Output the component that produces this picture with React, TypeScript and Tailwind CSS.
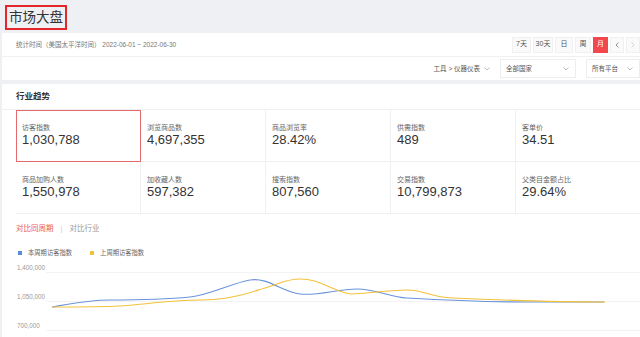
import React from "react";

const stats = [
  { label: "访客指数", value: "1,030,788", active: true },
  { label: "浏览商品数", value: "4,697,355" },
  { label: "商品浏览率", value: "28.42%" },
  { label: "供需指数", value: "489" },
  { label: "客单价", value: "34.51" },
  { label: "商品加购人数", value: "1,550,978" },
  { label: "加收藏人数", value: "597,382" },
  { label: "搜索指数", value: "807,560" },
  { label: "交易指数", value: "10,799,873" },
  { label: "父类目金额占比", value: "29.64%" },
];

function Chevron({ className = "" }: { className?: string }) {
  return (
    <svg width="6" height="4" viewBox="0 0 6 4" className={className}>
      <path d="M0.5 0.5 L3 3 L5.5 0.5" fill="none" stroke="#aaa" strokeWidth="0.8" />
    </svg>
  );
}

export default function App() {
  return (
    <div className="w-[640px] h-[337px] overflow-hidden bg-[#eef0f3] font-['Liberation_Sans','Noto_Sans_CJK_SC',sans-serif] text-[#333]">
      {/* header */}
      <div className="h-[33px] pl-[5px] pt-[5px]">
        <div className="inline-flex h-[25px] w-[62px] items-center justify-center border-2 border-[#e3262c] text-[13.5px] leading-none text-[#333]">
          市场大盘
        </div>
      </div>

      {/* filter panel */}
      <div className="ml-[2px] bg-white">
        <div className="flex h-[24px] items-center justify-between border-b border-[#f0f0f0] pl-[14px]">
          <div className="text-[6.5px] text-[#777]">统计时间（美国太平洋时间） 2022-06-01 ~ 2022-06-30</div>
          <div className="flex h-[16px] items-stretch gap-[2px] text-[7px] text-[#555]">
            <div className="flex w-[19px] items-center justify-center border border-[#f0f0f0] bg-[#fafafa]">7天</div>
            <div className="flex w-[20px] items-center justify-center border border-[#f0f0f0] bg-[#fafafa]">30天</div>
            <div className="flex w-[18px] items-center justify-center border border-[#f0f0f0] bg-[#fafafa]">日</div>
            <div className="flex w-[16px] items-center justify-center border border-[#f0f0f0] bg-[#fafafa]">周</div>
            <div className="flex w-[15px] items-center justify-center bg-[#f2474d] text-white">月</div>
            <div className="flex w-[14px] items-center justify-center border border-[#f0f0f0] bg-[#fafafa] text-[#777]">
              <svg width="4" height="6" viewBox="0 0 4 6"><path d="M3.5 0.5 L1 3 L3.5 5.5" fill="none" stroke="#777" strokeWidth="0.8" /></svg>
            </div>
            <div className="flex w-[14px] items-center justify-center border border-[#f0f0f0] bg-[#fafafa]">
              <svg width="4" height="6" viewBox="0 0 4 6"><path d="M0.5 0.5 L3 3 L0.5 5.5" fill="none" stroke="#ccc" strokeWidth="0.8" /></svg>
            </div>
          </div>
        </div>
        <div className="flex h-[23px] items-center justify-end gap-[8px] text-[6.5px] text-[#555]">
          <div className="flex items-center gap-[4px] pr-[2px]">
            <span>工具 &gt; 仪器仪表</span>
            <Chevron />
          </div>
          <div className="flex h-[19px] w-[76px] items-center justify-between border border-[#eee] pl-[5px] pr-[6px]">
            <span>全部国家</span>
            <Chevron />
          </div>
          <div className="ml-[2px] flex h-[19px] w-[54px] items-center justify-between border border-[#eee] pl-[5px] pr-[6px]">
            <span>所有平台</span>
            <Chevron />
          </div>
        </div>
      </div>

      {/* main panel */}
      <div className="ml-[2px] mt-[4px] h-[253px] bg-white">
        <div className="flex h-[26px] items-center border-b border-[#f0f0f0] pl-[14px] text-[8.5px] font-bold text-[#333]">
          行业趋势
        </div>
        <div className="ml-[14px] grid grid-cols-[125px_125px_125px_125px_125px]">
          {stats.map((s, i) => (
            <div
              key={i}
              className={
                s.active
                  ? "h-[52px] border border-[#e46a6c] pl-[5px] pt-[12px]"
                  : "h-[52px] border-b border-r border-[#f0f0f0] pl-[6px] pt-[13px]"
              }
            >
              <div className="text-[7px] leading-[10px] text-[#666]">{s.label}</div>
              <div className="text-[13px] leading-[14px] text-[#333]">{s.value}</div>
            </div>
          ))}
        </div>

        <div className="flex h-[30px] items-center pl-[14px] text-[7.5px]">
          <span className="text-[#ea5a55]">对比同周期</span>
          <span className="mx-[7px] text-[#ccc]">|</span>
          <span className="text-[#999]">对比行业</span>
        </div>

        <div className="flex h-[18px] items-center pl-[16px] text-[6.3px] text-[#666]">
          <span className="mr-[6px] h-[4px] w-[4px] bg-[#5b8bd6]" />
          <span>本周期访客指数</span>
          <span className="ml-[18px] mr-[6px] h-[4px] w-[4px] bg-[#f3c13a]" />
          <span>上周期访客指数</span>
        </div>

        <svg width="638" height="75" viewBox="2 262 638 75" className="block">
          <line x1="46" y1="272.5" x2="640" y2="272.5" stroke="#f3f3f3" strokeWidth="1" />
          <line x1="46" y1="301.5" x2="640" y2="301.5" stroke="#f3f3f3" strokeWidth="1" />
          <line x1="46" y1="330.5" x2="640" y2="330.5" stroke="#f3f3f3" strokeWidth="1" />
          <text x="17" y="270" fontSize="6.3" fill="#999" fontFamily="Liberation Sans, sans-serif">1,400,000</text>
          <text x="17" y="299" fontSize="6.3" fill="#999" fontFamily="Liberation Sans, sans-serif">1,050,000</text>
          <text x="17" y="327.5" fontSize="6.3" fill="#999" fontFamily="Liberation Sans, sans-serif">700,000</text>
          <path
            d="M52,307 C75,303 90,300 110,300 S170,299 190,297 S232,283 250,280 S282,292 300,294 S338,289 357,289 S390,297 407,298 S480,302 530,302 L604,302"
            fill="none"
            stroke="#6a93da"
            strokeWidth="1.1"
          />
          <path
            d="M52,307 C80,307 100,307 120,306 S170,300 200,300 S248,293 265,288 S286,279 300,279 S322,284 332,288 S345,294 353,294 S390,290 407,290 S430,297 453,298 S560,302 605,302"
            fill="none"
            stroke="#f3c13a"
            strokeWidth="1.1"
          />
        </svg>
      </div>
    </div>
  );
}
